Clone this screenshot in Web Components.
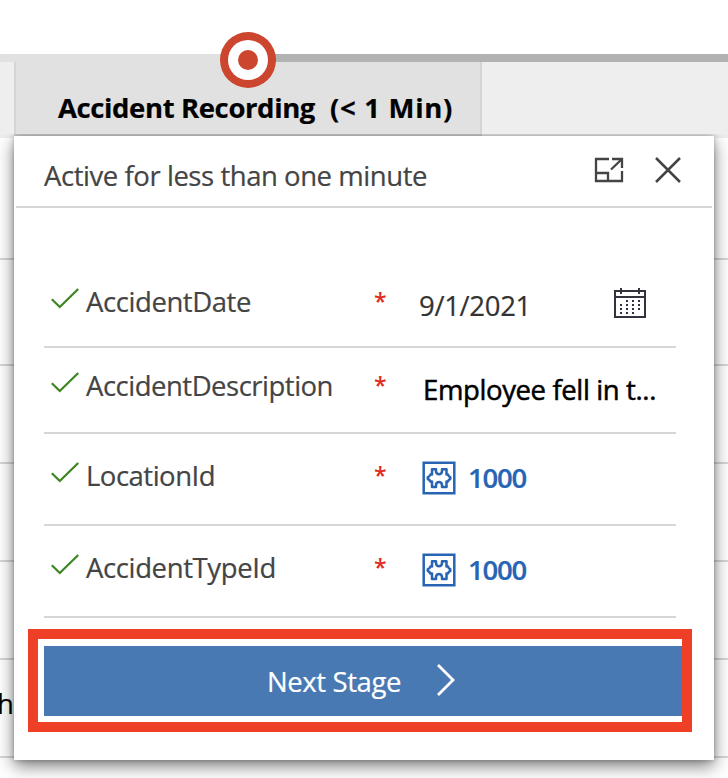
<!DOCTYPE html>
<html lang="en">
<head>
<meta charset="utf-8">
<title>Accident Recording</title>
<style>
html,body{margin:0;width:728px;height:778px;overflow:hidden;background:#fff;font-family:"Open Sans","Noto Sans",sans-serif}
</style>
</head>
<body>
<process-page></process-page>
<script>
const define = (name, html, init) => {
  const t = document.createElement('template');
  t.innerHTML = html;
  customElements.define(name, class extends HTMLElement {
    connectedCallback() {
      if (this.shadowRoot) return;
      this.attachShadow({mode: 'open'}).append(t.content.cloneNode(true));
      if (init) init(this, this.shadowRoot);
    }
  });
};

/* One line of text, tracked so that it fills the width given in its w attribute. */
define('tracked-text', `<style>
:host{display:inline-block;white-space:pre;font-size:27.5px;line-height:36px;flex:none;-webkit-text-stroke:.2px currentColor}
span{display:inline-block}</style><span><slot></slot></span>`, (el, root) => {
  const s = root.querySelector('span'), w = +el.getAttribute('w');
  const natural = s.getBoundingClientRect().width;
  s.style.letterSpacing = (w - natural) / el.textContent.length + 'px';
  el.style.width = w + 'px';
});

define('check-icon', `<style>:host{display:block;width:28px;height:22px}svg{display:block}</style>
<svg width="28" height="22" viewBox="0 0 28 22" fill="none" stroke="#3f8624" stroke-width="2.3"><path d="M.8 11.2 8.8 19 27.2 1"/></svg>`);

define('expand-icon', `<style>:host{display:block;width:30px;height:26px}svg{display:block}</style>
<svg width="30" height="26" viewBox="0 0 30 26" fill="none" stroke="#444" stroke-width="2.3"><path d="M15 2H2V24H28V14M2 16H14V24M18 2H28V11M27.5 2.5 17 12.5"/></svg>`);

define('close-icon', `<style>:host{display:block;width:26px;height:26px}svg{display:block}</style>
<svg width="26" height="26" viewBox="0 0 26 26" fill="none" stroke="#444" stroke-width="2.5"><path d="M1 1 25 25M25 1 1 25"/></svg>`);

define('calendar-icon', `<style>:host{display:block;width:32px;height:30px}svg{display:block}</style>
<svg width="32" height="30" viewBox="0 0 32 30" fill="none" stroke="#33323d" stroke-width="2"><path d="M1 3H31V29H1ZM1 9H31M7 0V6M25 0V6"/>
<path stroke-dasharray="2 4" d="M12 13H26M6 17H26M6 21H26M6 25H20"/></svg>`);

define('entity-icon', `<style>:host{display:block;width:34px;height:34px}svg{display:block}</style>
<svg width="34" height="34" viewBox="0 0 34 34" fill="none" stroke="#2864b4" stroke-width="2.5"><path d="M1.7 1.7H32.3V32.3H1.7Z"/>
<path stroke-linejoin="round" d="M10 8.2H14V10.5Q14.5 13.2 17 13.2T20 10.5V8.2H24.5V13.5H26Q26.5 15.5 28.3 16.2V18Q26.5 18.6 26 20.5H24.5V26H20V23.7Q19.5 21 17 21T14 23.7V26H10V20.5H8.4Q7.8 18.6 5.8 18V16.2Q7.8 15.5 8.4 13.5H10Z"/></svg>`);

define('form-field', `<style>
:host{display:grid;box-sizing:border-box;grid-template-columns:42px 288px 45px 1fr;border-bottom:2px solid #d6d6d6;align-items:start}
check-icon{margin:2px 0 0 7px}
.label{color:#444;margin-top:-2px}
.req{color:#e02b20;font-size:23px;font-weight:600;line-height:36px;height:36px;margin-top:-3px}
.value{display:flex;align-items:flex-start}
</style><check-icon></check-icon><div class="label"><slot name="label"></slot></div><div class="req">*</div><div class="value"><slot></slot></div>`);

define('stage-button', `<style>
:host{display:flex;box-sizing:border-box;width:664px;height:103px;border:10px solid #ee4026;background:#fff;padding:7px 0 6px 6px}
button{all:unset;box-sizing:border-box;display:flex;flex:1;height:70px;background:#4879b3;color:#fff;padding:18px 0 0 223px;gap:35px}
svg{display:block;margin-top:-1px}
</style><button><slot></slot><svg width="20" height="34" viewBox="0 0 20 34" fill="none" stroke="#fff" stroke-width="2.8"><path d="M2 2 17 17 2 32"/></svg></button>`);

define('stage-flyout', `<style>
:host{display:flex;flex-direction:column;background:#fff;box-shadow:0 6px 16px rgba(0,0,0,.52),0 0 5px rgba(0,0,0,.25)}
header{display:flex;box-sizing:border-box;height:72px;margin:0 2px;padding:21px 31px 0 28px;border-bottom:2px solid #d6d6d6;color:#444}
expand-icon{margin-left:auto}close-icon{margin-left:31px}
header tracked-text{margin-top:1px}
main{margin:64px 38px 0 30px;display:flex;flex-direction:column}
form-field:nth-child(1){height:76px;padding-top:14px}
form-field:nth-child(2){height:86px;padding-top:22px}
form-field:nth-child(3){height:92px;padding-top:26px}
form-field:nth-child(4){height:92px;padding-top:26px}
.date{margin:2px 0 0;color:#333}
calendar-icon{margin:2px 0 0 83px}
.desc{margin:2px 0 0 4px;color:#000;-webkit-text-stroke:.5px #000}
entity-icon{margin:1px 0 0 3px}
.link{color:#2864b4;font-weight:600;margin:0 0 0 12px}
stage-button{margin:11px 0 0 14px}
</style>
<header><tracked-text w="383">Active for less than one minute</tracked-text><expand-icon></expand-icon><close-icon></close-icon></header>
<main>
<form-field><tracked-text slot="label" w="165">AccidentDate</tracked-text><tracked-text class="date" w="112">9/1/2021</tracked-text><calendar-icon></calendar-icon></form-field>
<form-field><tracked-text slot="label" w="247">AccidentDescription</tracked-text><tracked-text class="desc" w="233">Employee fell in t...</tracked-text></form-field>
<form-field><tracked-text slot="label" w="129">LocationId</tracked-text><entity-icon></entity-icon><tracked-text class="link" w="58">1000</tracked-text></form-field>
<form-field><tracked-text slot="label" w="190">AccidentTypeId</tracked-text><entity-icon></entity-icon><tracked-text class="link" w="58">1000</tracked-text></form-field>
</main>
<stage-button><tracked-text w="134">Next Stage</tracked-text></stage-button>`);

define('stage-marker', `<style>:host{display:block;width:56px;height:56px}svg{display:block}</style>
<svg width="56" height="56" viewBox="0 0 56 56"><circle cx="28" cy="28" r="28" fill="#cc452f"/><circle cx="28" cy="28" r="20" fill="#fff"/><circle cx="28" cy="28" r="10" fill="#cc452f"/></svg>`);

define('stage-bar', `<style>
:host{display:block;padding-top:54px}
.rail{height:8px;display:grid;grid-template-columns:248px 1fr;background:#b2b2b2}
.rail i{background:#e1e1e1}
.band{height:76px;background:#eee;padding-left:14px}
.tab{display:flex;gap:15px;box-sizing:border-box;width:468px;height:74px;background:#e1e1e1;border:2px solid #d4d4d4;border-top:0;padding:28px 0 0 42px;font-weight:700;color:#000}
</style><div class="rail"><i></i></div><div class="band"><div class="tab"><slot></slot></div></div>`);

define('page-rows', `<style>
:host{display:block}
div{box-sizing:border-box;border-bottom:2px solid #d6d6d6;height:98px;color:#000}
div:nth-of-type(1){height:122px}div:nth-of-type(2){height:106px}
div:nth-of-type(6){padding-top:26px}
tracked-text{margin-left:-3px}
</style><div></div><div></div><div></div><div></div><div></div><div><tracked-text w="15">h</tracked-text></div>`);

define('process-page', `<style>
:host{display:block;position:relative;width:728px;height:778px;overflow:hidden;background:#fff}
stage-flyout{position:absolute;left:14px;top:136px;width:700px;height:624px;z-index:1;clip-path:inset(-2px -30px -30px -30px)}
stage-marker{position:absolute;left:220px;top:32px}
</style>
<stage-bar><tracked-text w="257">Accident Recording</tracked-text><tracked-text w="123">(&lt; 1 Min)</tracked-text></stage-bar>
<page-rows></page-rows>
<stage-marker></stage-marker>
<stage-flyout></stage-flyout>`);
</script>
</body>
</html>
